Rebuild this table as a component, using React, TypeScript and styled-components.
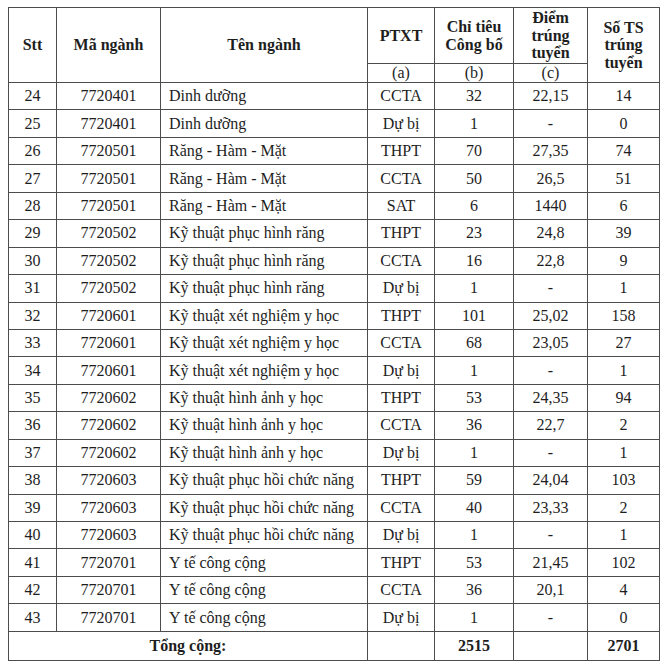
import React from "react";
import styled, { createGlobalStyle } from "styled-components";

const GlobalStyle = createGlobalStyle`
  html, body {
    margin: 0;
    padding: 0;
    background: #ffffff;
  }
`;

const Page = styled.div`
  padding: 7px 0 0 8px;
  font-family: "Liberation Serif", "Times New Roman", serif;
  color: #1e1e1e;
`;

const Table = styled.table`
  border-collapse: collapse;
  table-layout: fixed;
  width: 651px;
  font-size: 16px;
`;

const HeadCell = styled.th<{ $small?: boolean }>`
  border: 1px solid #4d4d4d;
  font-weight: ${(p) => (p.$small ? 400 : 700)};
  text-align: center;
  vertical-align: middle;
  line-height: ${(p) => (p.$small ? "16px" : "17.5px")};
  padding: 0 2px;
`;

const Row = styled.tr<{ $h: number }>`
  height: ${(p) => p.$h}px;
`;

const Cell = styled.td<{ $left?: boolean; $bold?: boolean }>`
  border: 1px solid #4d4d4d;
  text-align: ${(p) => (p.$left ? "left" : "center")};
  padding: ${(p) => (p.$left ? "0 0 0 8px" : "0")};
  font-weight: ${(p) => (p.$bold ? 700 : 400)};
  vertical-align: middle;
  line-height: 18px;
  white-space: nowrap;
`;

type Item = [string, string, string, string, string, string, string];

const rows: Item[] = [
  ["24", "7720401", "Dinh dưỡng", "CCTA", "32", "22,15", "14"],
  ["25", "7720401", "Dinh dưỡng", "Dự bị", "1", "-", "0"],
  ["26", "7720501", "Răng - Hàm - Mặt", "THPT", "70", "27,35", "74"],
  ["27", "7720501", "Răng - Hàm - Mặt", "CCTA", "50", "26,5", "51"],
  ["28", "7720501", "Răng - Hàm - Mặt", "SAT", "6", "1440", "6"],
  ["29", "7720502", "Kỹ thuật phục hình răng", "THPT", "23", "24,8", "39"],
  ["30", "7720502", "Kỹ thuật phục hình răng", "CCTA", "16", "22,8", "9"],
  ["31", "7720502", "Kỹ thuật phục hình răng", "Dự bị", "1", "-", "1"],
  ["32", "7720601", "Kỹ thuật xét nghiệm y học", "THPT", "101", "25,02", "158"],
  ["33", "7720601", "Kỹ thuật xét nghiệm y học", "CCTA", "68", "23,05", "27"],
  ["34", "7720601", "Kỹ thuật xét nghiệm y học", "Dự bị", "1", "-", "1"],
  ["35", "7720602", "Kỹ thuật hình ảnh y học", "THPT", "53", "24,35", "94"],
  ["36", "7720602", "Kỹ thuật hình ảnh y học", "CCTA", "36", "22,7", "2"],
  ["37", "7720602", "Kỹ thuật hình ảnh y học", "Dự bị", "1", "-", "1"],
  ["38", "7720603", "Kỹ thuật phục hồi chức năng", "THPT", "59", "24,04", "103"],
  ["39", "7720603", "Kỹ thuật phục hồi chức năng", "CCTA", "40", "23,33", "2"],
  ["40", "7720603", "Kỹ thuật phục hồi chức năng", "Dự bị", "1", "-", "1"],
  ["41", "7720701", "Y tế công cộng", "THPT", "53", "21,45", "102"],
  ["42", "7720701", "Y tế công cộng", "CCTA", "36", "20,1", "4"],
  ["43", "7720701", "Y tế công cộng", "Dự bị", "1", "-", "0"],
];

const colWidths = [48, 104, 207, 67, 79, 74, 72];

export default function App() {
  return (
    <Page>
      <GlobalStyle />
      <Table>
        <colgroup>
          {colWidths.map((w, i) => (
            <col key={i} style={{ width: w }} />
          ))}
        </colgroup>
        <thead>
          <Row $h={56}>
            <HeadCell rowSpan={2}>Stt</HeadCell>
            <HeadCell rowSpan={2}>Mã ngành</HeadCell>
            <HeadCell rowSpan={2}>Tên ngành</HeadCell>
            <HeadCell>PTXT</HeadCell>
            <HeadCell>
              Chỉ tiêu
              <br />
              Công bố
            </HeadCell>
            <HeadCell>
              Điểm
              <br />
              trúng
              <br />
              tuyển
            </HeadCell>
            <HeadCell rowSpan={2}>
              Số TS
              <br />
              trúng
              <br />
              tuyển
            </HeadCell>
          </Row>
          <Row $h={19}>
            <HeadCell $small>(a)</HeadCell>
            <HeadCell $small>(b)</HeadCell>
            <HeadCell $small>(c)</HeadCell>
          </Row>
        </thead>
        <tbody>
          {rows.map((r) => (
            <Row $h={27.45} key={r[0]}>
              <Cell>{r[0]}</Cell>
              <Cell>{r[1]}</Cell>
              <Cell $left>{r[2]}</Cell>
              <Cell>{r[3]}</Cell>
              <Cell>{r[4]}</Cell>
              <Cell>{r[5]}</Cell>
              <Cell>{r[6]}</Cell>
            </Row>
          ))}
          <Row $h={29}>
            <Cell colSpan={3} $bold>
              Tổng cộng:
            </Cell>
            <Cell />
            <Cell $bold>2515</Cell>
            <Cell />
            <Cell $bold>2701</Cell>
          </Row>
        </tbody>
      </Table>
    </Page>
  );
}
